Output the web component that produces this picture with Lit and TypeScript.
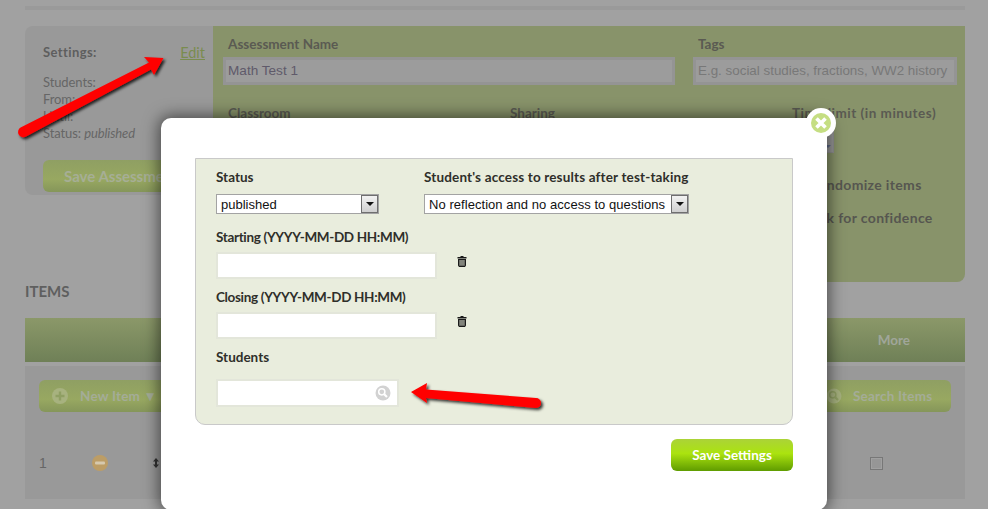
import { LitElement, html, css, svg } from "lit";
import { customElement } from "lit/decorators.js";

const trash = html`<svg class="trash" viewBox="0 0 10 11" width="10" height="11"><path fill="#1a1a1a" d="M3.500 0h3v1H9.500v1.400H.5V1h3zM1 3h8v6.500L8 11H2L1 9.500zM2.600 4v5.800h.9V4zm1.900 0v5.800h1V4zm2 0v5.800h.9V4z"/></svg>`;
const searchIcon = (c: string, hole: string) => html`<svg viewBox="0 0 16 16" width="16" height="16"><circle cx="8" cy="8" r="7.500" fill="${c}"/><circle cx="6.800" cy="6.800" r="3.100" fill="${c}" stroke="${hole}" stroke-width="1.500"/><path d="M9.200 9.200 12 12" stroke="${hole}" stroke-width="2.200"/></svg>`;

@customElement("app-root")
export class AppRoot extends LitElement {
  static styles = css`
    :host { display: block; position: relative; width: 988px; height: 509px; overflow: hidden; background: #a1a1a1; font-family: "Lato", "Noto Sans", sans-serif; color: #5c5c5c; font-size: 13px; }
    * { box-sizing: border-box; }
    .page { display: flex; flex-direction: column; padding: 6px 23px 0 25px; }
    .rule { height: 4px; background: #9a9a9a; }
    .top { display: flex; align-items: flex-start; margin-top: 16px; }
    .side { width: 188px; height: 169px; background: #999; border-radius: 8px 0 0 8px; padding: 18px 8px 0 18px; flex: none; }
    .side-head { display: flex; justify-content: space-between; align-items: center; height: 16px; }
    .side-head b { font-size: 13px; color: #5e5e5e; letter-spacing: .4px; }
    .edit { color: #7a8c4f; text-decoration: underline; font-size: 14.500px; }
    .meta { margin-top: 14px; line-height: 17px; font-size: 13px; color: #666; letter-spacing: -.1px; }
    .meta i { font-style: italic; }
    .btn { display: flex; align-items: center; height: 32px; border-radius: 6px; background: linear-gradient(#8f9f63, #98a861 60%, #85965a); color: #a6ae96; font-weight: 700; }
    .save-a { margin-top: 18px; width: 180px; padding-left: 21px; font-size: 15px; }
    .main { flex: 1; height: 256px; background: #88936a; border-radius: 0 0 8px 0; padding: 10px 8px 0 10px; }
    .row { display: flex; }
    .f1 { width: 452px; margin-right: 18px; }
    .f2 { width: 264px; }
    .lab { display: block; font-weight: 700; color: #5a5a52; font-size: 13.500px; line-height: 16px; padding-left: 5px; }
    .inp { height: 28px; margin-top: 5px; background: #9c9c9c; border: 3px solid #949494; padding-left: 2px; line-height: 22px; font-family: "Liberation Sans", sans-serif; font-size: 13.600px; color: #5f5a6a; white-space: nowrap; overflow: hidden; }
    .inp.ph { color: #787878; font-size: 13.400px; }
    .r2 { margin-top: 20px; }
    .c { width: 282px; }
    .c3 { width: 170px; }
    .r2 .lab { white-space: nowrap; }
    .wide { letter-spacing: .5px; }
    .spin { margin: 5px 0 0 35px; width: 12px; height: 27px; background: #999; border: 1px solid #8f8f8f; display: flex; flex-direction: column; justify-content: flex-end; align-items: center; padding-bottom: 4px; }
    .spin::after { content: ""; border: 3px solid transparent; border-top: 3px solid #5f6b8a; border-bottom: 0; }
    .checks { margin: 24px 0 0 23px; display: grid; row-gap: 17px; white-space: nowrap; }
    .checks .lab { color: #565650; padding-left: 0; font-size: 14px; letter-spacing: .35px; }
    .items { font-size: 15px; font-weight: 700; line-height: 20px; margin-top: -1px; color: #5f5f5f; height: 37px; }
    .bar { height: 44px; background: linear-gradient(#8b9869, #6f8057); display: flex; align-items: center; justify-content: flex-end; padding-right: 55px; color: #a0a69a; font-weight: 700; font-size: 13.500px; }
    .table { margin-top: 4px; height: 133px; background: #999; padding: 14px 14px 0 14px; }
    .tools { display: flex; justify-content: space-between; }
    .tools .btn { font-size: 13.500px; color: #a4ac98; letter-spacing: .2px; }
    .new { width: 180px; padding-left: 13px; }
    .srch { width: 180px; padding-left: 55px; gap: 11px; }
    .new span { margin-left: 12px; }
    .irow { display: grid; grid-template-columns: 53px 64px 1fr 13px; align-items: center; margin-top: 43px; margin-right: 68px; height: 14px; }
    .num { color: #666; font-family: "Liberation Sans", sans-serif; font-size: 14px; }
    .cb { width: 13px; height: 13px; border: 1px solid #777; background: #969696; box-shadow: inset 0 0 0 1px #a0a0a0; }
    .mv { display: flex; align-items: center; gap: 44px; margin-top: -1px; }
    .mv svg { flex: none; }

    .modal { position: absolute; left: 161px; top: 118px; width: 666px; height: 392px; background: #fff; border-radius: 10px; box-shadow: 0 0 16px 2px rgba(0,0,0,.55); padding: 40px 34px 0; }
    .panel { height: 267px; background: #e9eddd; border: 1px solid #c9c9c9; border-radius: 0 0 10px 10px; padding: 10px 20px 0; color: #2c2c2c; }
    .panel .lab { padding: 0; color: #2f2f2a; font-size: 13.500px; line-height: 16px; white-space: nowrap; }
    .panel .lab.spread { letter-spacing: .16px; }
    .panel .lab.tight { letter-spacing: -.34px; }
    .sel-row { display: flex; gap: 45px; }
    .sel { display: flex; margin-top: 9px; height: 20px; background: #fff; border: 1px solid #a3a3a3; font-family: "Liberation Sans", sans-serif; font-size: 13px; line-height: 18px; color: #111; padding: 1px 0 0 4px; justify-content: space-between; align-items: center; white-space: nowrap; }
    .s1 { width: 163px; }
    .s2 { width: 265px; letter-spacing: .05px; }
    .dd { flex: none; width: 17px; height: 18px; margin-top: -1px; background: linear-gradient(#f2f2f2, #cfcfcf); border: 1px solid #6f6f6f; display: flex; align-items: center; justify-content: center; }
    .dd::after { content: ""; border: 4px solid transparent; border-top: 4px solid #111; border-bottom: 0; }
    .lab.gap { margin-top: 15px; }
    .txt { margin-top: 7px; height: 27px; background: #fff; border: 2px solid #e3e6da; }
    .date { display: flex; align-items: flex-start; gap: 20px; }
    .date .txt { width: 221px; flex: none; }
    .trash { margin-top: 11px; }
    .lab.g2 { margin-top: 10px; }
    .stu { width: 183px; height: 28px; margin-top: 14px; display: flex; align-items: center; justify-content: flex-end; padding-right: 6px; }
    .foot { display: flex; justify-content: flex-end; margin-top: 14px; }
    .save { width: 122px; height: 32px; border-radius: 6px; background: linear-gradient(#abd338, #abe30f 45%, #5f9c00); color: #fff; font-weight: 700; font-size: 13.500px; display: flex; align-items: center; justify-content: center; }
    .close { position: absolute; left: 806px; top: 108px; width: 30px; height: 30px; border-radius: 50%; background: #fff; display: flex; align-items: center; justify-content: center; }
    .arrows { position: absolute; left: 0; top: 0; pointer-events: none; }
  `;

  render() {
    return html`
      <div class="page">
        <div class="rule"></div>
        <div class="top">
          <div class="side">
            <div class="side-head"><b>Settings:</b><span class="edit">Edit</span></div>
            <div class="meta">Students:<br />From:<br />Until:<br />Status: <i>published</i></div>
            <div class="btn save-a">Save Assessment</div>
          </div>
          <div class="main">
            <div class="row">
              <div class="f1"><div class="lab">Assessment Name</div><div class="inp">Math Test 1</div></div>
              <div class="f2"><div class="lab">Tags</div><div class="inp ph">E.g. social studies, fractions, WW2 history</div></div>
            </div>
            <div class="row r2">
              <div class="c"><div class="lab">Classroom</div></div>
              <div class="c"><div class="lab">Sharing</div></div>
              <div class="c3">
                <div class="lab wide">Time limit (in minutes)</div>
                <div class="spin"></div>
                <div class="checks"><div class="lab">Randomize items</div><div class="lab">Ask for confidence</div></div>
              </div>
            </div>
          </div>
        </div>
        <div class="items">ITEMS</div>
        <div class="bar">More</div>
        <div class="table">
          <div class="tools">
            <div class="btn new">
              <svg viewBox="0 0 16 16" width="16" height="16"><circle cx="8" cy="8" r="8" fill="#a7b27f"/><path d="M6.800 3.500h2.400v3.300h3.300v2.400H9.200v3.300H6.800V9.200H3.500V6.800h3.300z" fill="#8f9f63"/></svg>
              <span>New Item ▼</span>
            </div>
            <div class="btn srch">${searchIcon("#a5b07e", "#8f9f63")}<span>Search Items</span></div>
          </div>
          <div class="irow">
            <div class="num">1</div>
            <div class="mv">
              <svg viewBox="0 0 16 16" width="16" height="16"><circle cx="8" cy="8" r="8" fill="#bc9d66"/><rect x="3" y="6.500" width="10" height="3" rx="1" fill="#d6c9ae"/></svg>
              <svg viewBox="0 0 8 10" width="8" height="10"><path fill="#333" d="M4 0 7 3.400H5V6.600H7L4 10 1 6.600H3V3.400H1z"/></svg>
            </div>
            <div></div>
            <div class="cb"></div>
          </div>
        </div>
      </div>

      <div class="modal">
        <div class="panel">
          <div class="sel-row">
            <div>
              <div class="lab">Status</div>
              <div class="sel s1">published<span class="dd"></span></div>
            </div>
            <div>
              <div class="lab spread">Student's access to results after test-taking</div>
              <div class="sel s2">No reflection and no access to questions<span class="dd"></span></div>
            </div>
          </div>
          <div class="lab gap tight">Starting (YYYY-MM-DD HH:MM)</div>
          <div class="date"><div class="txt"></div>${trash}</div>
          <div class="lab g2 tight">Closing (YYYY-MM-DD HH:MM)</div>
          <div class="date"><div class="txt"></div>${trash}</div>
          <div class="lab g2">Students</div>
          <div class="txt stu">${searchIcon("#d2d2d2", "#ffffff")}</div>
        </div>
        <div class="foot"><div class="save">Save Settings</div></div>
      </div>

      <div class="close">
        <svg viewBox="0 0 20 20" width="20" height="20"><circle cx="10" cy="10" r="10" fill="#c5de82"/><path d="M5.500 5.500l9 9M14.500 5.500l-9 9" stroke="#fff" stroke-width="3.600"/></svg>
      </div>

      <svg class="arrows" width="988" height="509" viewBox="0 0 988 509">
        <defs><filter id="sh" x="-20%" y="-20%" width="140%" height="140%"><feDropShadow dx="2" dy="2" stdDeviation="1.600" flood-color="#000" flood-opacity=".8"/></filter></defs>
        ${svg`<g filter="url(#sh)" fill="#f00">
          <path d="M20.600 127.500 149 62.500 144 57 163.500 58 154 75 151 69.500 26 136.500a4.500 4.500 0 0 1-5.400-9z"/>
          <path d="M411 392 427 383 426 389.500 536 398a5 5 0 0 1 0 10L426 398 427 403z"/>
        </g>`}
      </svg>
    `;
  }
}
